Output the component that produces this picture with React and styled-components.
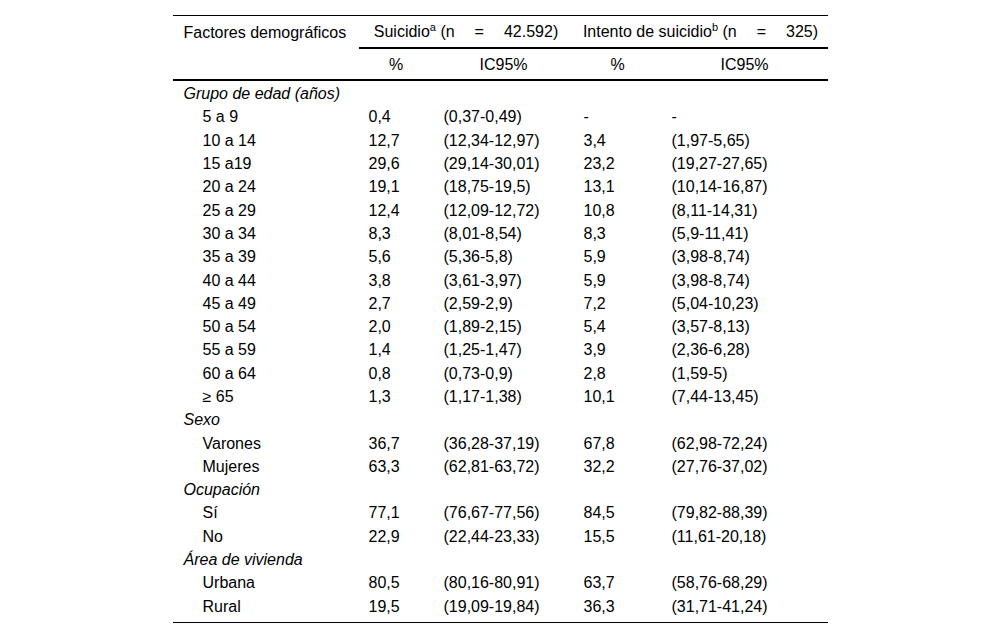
import React from 'react';
import styled, { createGlobalStyle } from 'styled-components';

const GlobalStyle = createGlobalStyle`
  html, body {
    margin: 0;
    padding: 0;
    background: #fff;
  }
  body {
    font-family: "Liberation Sans", Arial, sans-serif;
    color: #000;
  }
`;

const sections = [
  {
    title: 'Grupo de edad (años)',
    rows: [
      ['5 a 9', '0,4', '(0,37-0,49)', '-', '-'],
      ['10 a 14', '12,7', '(12,34-12,97)', '3,4', '(1,97-5,65)'],
      ['15 a19', '29,6', '(29,14-30,01)', '23,2', '(19,27-27,65)'],
      ['20 a 24', '19,1', '(18,75-19,5)', '13,1', '(10,14-16,87)'],
      ['25 a 29', '12,4', '(12,09-12,72)', '10,8', '(8,11-14,31)'],
      ['30 a 34', '8,3', '(8,01-8,54)', '8,3', '(5,9-11,41)'],
      ['35 a 39', '5,6', '(5,36-5,8)', '5,9', '(3,98-8,74)'],
      ['40 a 44', '3,8', '(3,61-3,97)', '5,9', '(3,98-8,74)'],
      ['45 a 49', '2,7', '(2,59-2,9)', '7,2', '(5,04-10,23)'],
      ['50 a 54', '2,0', '(1,89-2,15)', '5,4', '(3,57-8,13)'],
      ['55 a 59', '1,4', '(1,25-1,47)', '3,9', '(2,36-6,28)'],
      ['60 a 64', '0,8', '(0,73-0,9)', '2,8', '(1,59-5)'],
      ['≥ 65', '1,3', '(1,17-1,38)', '10,1', '(7,44-13,45)'],
    ],
  },
  {
    title: 'Sexo',
    rows: [
      ['Varones', '36,7', '(36,28-37,19)', '67,8', '(62,98-72,24)'],
      ['Mujeres', '63,3', '(62,81-63,72)', '32,2', '(27,76-37,02)'],
    ],
  },
  {
    title: 'Ocupación',
    rows: [
      ['Sí', '77,1', '(76,67-77,56)', '84,5', '(79,82-88,39)'],
      ['No', '22,9', '(22,44-23,33)', '15,5', '(11,61-20,18)'],
    ],
  },
  {
    title: 'Área de vivienda',
    rows: [
      ['Urbana', '80,5', '(80,16-80,91)', '63,7', '(58,76-68,29)'],
      ['Rural', '19,5', '(19,09-19,84)', '36,3', '(31,71-41,24)'],
    ],
  },
];

const Wrapper = styled.div`
  padding-top: 15px;
  display: flex;
  justify-content: center;
`;

const Table = styled.table`
  width: 655px;
  border-collapse: collapse;
  table-layout: fixed;
  font-size: 16px;
  border-top: 1px solid #000;
  border-bottom: 1px solid #000;
`;

const HeadRow = styled.tr`
  height: ${(p) => p.$h}px;
  border-bottom: ${(p) => (p.$rule ? '2px solid #000' : 'none')};
`;

const HeadCell = styled.th`
  font-weight: normal;
  text-align: ${(p) => (p.$center ? 'center' : 'left')};
  padding: 2px 0 0 ${(p) => (p.$center ? 0 : 11)}px;
  border-bottom: ${(p) => (p.$under ? '2px solid #000' : 'none')};
  white-space: nowrap;
  vertical-align: middle;
  line-height: 18px;
`;

const Gap = styled.span`
  display: inline-block;
  width: ${(p) => p.$w}px;
`;

const Sup = styled.sup`
  font-size: 11px;
  vertical-align: 6px;
  line-height: 0;
`;

const Row = styled.tr`
  height: 23.3px;
`;

const SectionCell = styled.td`
  font-style: italic;
  padding: 0 0 0 11px;
  white-space: nowrap;
  line-height: 18px;
`;

const Cell = styled.td`
  padding: 0 0 0 ${(p) => p.$pad}px;
  white-space: nowrap;
  line-height: 18px;
`;

const SpacerRow = styled.tr`
  height: ${(p) => p.$h}px;
`;

export default function App() {
  return (
    <>
      <GlobalStyle />
      <Wrapper>
        <Table>
          <colgroup>
            <col style={{ width: 186 }} />
            <col style={{ width: 75 }} />
            <col style={{ width: 140 }} />
            <col style={{ width: 88 }} />
            <col style={{ width: 166 }} />
          </colgroup>
          <thead>
            <HeadRow $h={32}>
              <HeadCell>Factores demográficos</HeadCell>
              <HeadCell colSpan={2} $center $under>
                Suicidio<Sup>a</Sup> (n<Gap $w={20} />=<Gap $w={20} />42.592)
              </HeadCell>
              <HeadCell colSpan={2} $center $under>
                Intento de suicidio<Sup>b</Sup> (n<Gap $w={20} />=<Gap $w={20} />325)
              </HeadCell>
            </HeadRow>
            <HeadRow $h={32} $rule>
              <HeadCell />
              <HeadCell $center>%</HeadCell>
              <HeadCell $center>IC95%</HeadCell>
              <HeadCell $center>%</HeadCell>
              <HeadCell $center>IC95%</HeadCell>
            </HeadRow>
          </thead>
          <tbody>
            <SpacerRow $h={1}>
              <td colSpan={5} />
            </SpacerRow>
            {sections.map((s) => (
              <React.Fragment key={s.title}>
                <Row>
                  <SectionCell colSpan={5}>{s.title}</SectionCell>
                </Row>
                {s.rows.map((r) => (
                  <Row key={s.title + r[0]}>
                    <Cell $pad={30}>{r[0]}</Cell>
                    <Cell $pad={10}>{r[1]}</Cell>
                    <Cell $pad={10}>{r[2]}</Cell>
                    <Cell $pad={10}>{r[3]}</Cell>
                    <Cell $pad={10}>{r[4]}</Cell>
                  </Row>
                ))}
              </React.Fragment>
            ))}
            <SpacerRow $h={4}>
              <td colSpan={5} />
            </SpacerRow>
          </tbody>
        </Table>
      </Wrapper>
    </>
  );
}
